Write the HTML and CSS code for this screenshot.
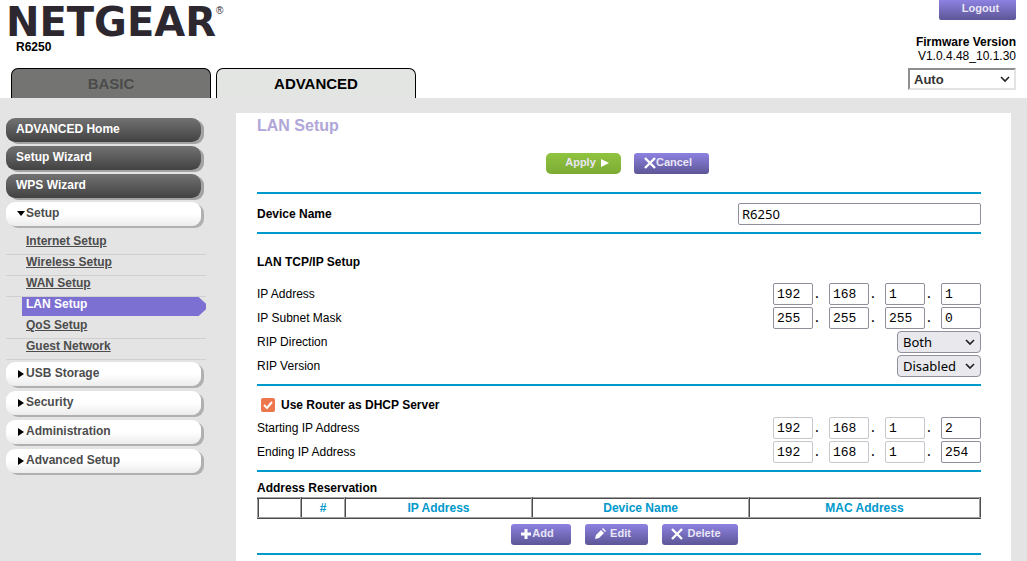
FILE: index.html
```html
<!DOCTYPE html>
<html lang="en">
<head>
<meta charset="utf-8">
<title>NETGEAR Router R6250</title>
<link rel="stylesheet" href="styles.css">
</head>
<body>
<header class="top">
  <div class="brand">
    <div class="logo">NETGEAR<sup class="reg">®</sup></div>
    <div class="model">R6250</div>
    <nav class="tabs">
      <button type="button" class="tab">BASIC</button>
      <button type="button" class="tab tab-on">ADVANCED</button>
    </nav>
  </div>
  <div class="session">
    <button type="button" class="btn logout">Logout</button>
    <div class="firmware"><b>Firmware Version</b><span>V1.0.4.48_10.1.30</span></div>
    <select class="language" aria-label="Language"><option>Auto</option></select>
  </div>
</header>

<div class="body">
  <nav class="side">
    <button type="button" class="pill dark">ADVANCED Home</button>
    <button type="button" class="pill dark">Setup Wizard</button>
    <button type="button" class="pill dark">WPS Wizard</button>
    <button type="button" class="pill light"><svg class="arrow" viewBox="0 0 10 10"><path d="M1 3h8L5 8z"/></svg>Setup</button>
    <ul class="sub">
      <li><a href="#">Internet Setup</a></li>
      <li><a href="#">Wireless Setup</a></li>
      <li><a href="#">WAN Setup</a></li>
      <li class="here"><a href="#">LAN Setup</a></li>
      <li><a href="#">QoS Setup</a></li>
      <li><a href="#">Guest Network</a></li>
    </ul>
    <button type="button" class="pill light"><svg class="arrow" viewBox="0 0 10 10"><path d="M2 2l6 4-6 4z"/></svg>USB Storage</button>
    <button type="button" class="pill light"><svg class="arrow" viewBox="0 0 10 10"><path d="M2 2l6 4-6 4z"/></svg>Security</button>
    <button type="button" class="pill light"><svg class="arrow" viewBox="0 0 10 10"><path d="M2 2l6 4-6 4z"/></svg>Administration</button>
    <button type="button" class="pill light"><svg class="arrow" viewBox="0 0 10 10"><path d="M2 2l6 4-6 4z"/></svg>Advanced Setup</button>
  </nav>

  <main class="panel">
    <h1>LAN Setup</h1>
    <div class="actions form-actions">
      <button type="button" class="btn apply">Apply<svg class="play" viewBox="0 0 8 10"><path d="M0 1l8 4-8 4z"/></svg></button>
      <button type="button" class="btn cancel"><svg class="icon" viewBox="0 0 12 12"><path d="M1 1l10 10M11 1l-10 10" class="stroke"/></svg>Cancel</button>
    </div>

    <section class="block device">
      <div class="row"><label for="device"><b>Device Name</b></label><input id="device" class="text" value="R6250"></div>
    </section>

    <section class="block tcpip">
      <h2>LAN TCP/IP Setup</h2>
      <div class="row"><label for="ip1">IP Address</label>
        <div class="ip"><input id="ip1" value="192"><i>.</i><input aria-label="IP Address 2" value="168"><i>.</i><input aria-label="IP Address 3" value="1"><i>.</i><input aria-label="IP Address 4" value="1"></div></div>
      <div class="row"><label for="mask1">IP Subnet Mask</label>
        <div class="ip"><input id="mask1" value="255"><i>.</i><input aria-label="Subnet Mask 2" value="255"><i>.</i><input aria-label="Subnet Mask 3" value="255"><i>.</i><input aria-label="Subnet Mask 4" value="0"></div></div>
      <div class="row"><label for="ripd">RIP Direction</label><select id="ripd" class="choice"><option>Both</option></select></div>
      <div class="row"><label for="ripv">RIP Version</label><select id="ripv" class="choice"><option>Disabled</option></select></div>
    </section>

    <section class="block dhcp">
      <div class="row check"><input type="checkbox" id="dhcp" checked><label for="dhcp"><b>Use Router as DHCP Server</b></label></div>
      <div class="row"><label for="end4a">Starting IP Address</label>
        <div class="ip"><input disabled aria-label="Starting IP 1" value="192"><i>.</i><input disabled aria-label="Starting IP 2" value="168"><i>.</i><input disabled aria-label="Starting IP 3" value="1"><i>.</i><input id="end4a" value="2"></div></div>
      <div class="row"><label for="end4b">Ending IP Address</label>
        <div class="ip"><input disabled aria-label="Ending IP 1" value="192"><i>.</i><input disabled aria-label="Ending IP 2" value="168"><i>.</i><input disabled aria-label="Ending IP 3" value="1"><i>.</i><input id="end4b" value="254"></div></div>
    </section>

    <section class="block reservation">
      <h2>Address Reservation</h2>
      <table class="hosts">
        <colgroup><col class="c-pick"><col class="c-pick"><col class="c-ip"><col class="c-name"><col></colgroup>
        <tr><th></th><th>#</th><th>IP Address</th><th>Device Name</th><th>MAC Address</th></tr>
      </table>
      <div class="actions">
        <button type="button" class="btn add"><svg class="icon" viewBox="0 0 12 12"><path d="M6 1v10M1 6h10" class="stroke thick"/></svg>Add</button>
        <button type="button" class="btn edit"><svg class="icon" viewBox="0 0 12 12"><path d="M1 11l1-4 5-5 3 3-5 5zM8 1l1-1 3 3-1 1z"/></svg>Edit</button>
        <button type="button" class="btn delete"><svg class="icon" viewBox="0 0 12 12"><path d="M1 1l10 10M11 1l-10 10" class="stroke"/></svg>Delete</button>
      </div>
    </section>
    <div class="block"></div>
  </main>
</div>
</body>
</html>
```
FILE: styles.css
```css
* { box-sizing: border-box; }
html { background: #e4e4e4; }
body {
  margin: 0;
  min-height: 100vh;
  display: flex;
  flex-direction: column;
  font: 12px/14px "Liberation Sans", Arial, sans-serif;
  color: #000;
  overflow: hidden;
}
button, select, input { font: inherit; margin: 0; }
button { border: 0; cursor: pointer; }
h1, h2, ul { margin: 0; padding: 0; }

/* header */
.top {
  display: flex;
  justify-content: space-between;
  background: #fff;
  padding-right: 11px;
}
.brand { display: flex; flex-direction: column; }
.logo {
  display: flex;
  padding: 5px 0 0 6px;
  font: bold 40px/35px "DejaVu Sans", sans-serif;
  color: #2d2830;
}
.reg { font: 10px/12px "Liberation Sans", sans-serif; }
.model { padding-left: 16px; font-weight: bold; }
.tabs { display: flex; gap: 5px; padding: 14px 0 0 11px; }
.tab {
  width: 200px;
  height: 30px;
  border: 1px solid #000;
  border-bottom: 0;
  border-radius: 7px 7px 0 0;
  background: #747572;
  color: #4b4b4b;
  font-size: 15px;
  font-weight: bold;
}
.tab-on { background: #e3e5e2; color: #000; }
.session { display: flex; flex-direction: column; align-items: flex-end; }
.firmware {
  display: flex;
  flex-direction: column;
  text-align: right;
  padding: 15px 0 5px;
}
.language {
  appearance: none;
  width: 108px;
  height: 22px;
  border: 2px solid;
  border-color: #8f8f8f #e3e3e3 #e3e3e3 #8f8f8f;
  padding: 1px 4px 0;
  font-size: 13px;
  font-weight: bold;
  color: #333;
}
.language, .choice {
  background: #fff url("data:image/svg+xml,%3Csvg xmlns='http://www.w3.org/2000/svg' width='10' height='8'%3E%3Cpath d='M1 2l4 4 4-4' fill='none' stroke='%23222' stroke-width='1.6'/%3E%3C/svg%3E") no-repeat right 4px center;
}

/* buttons */
.btn {
  display: flex;
  align-items: center;
  justify-content: center;
  height: 21px;
  padding: 0 7px 3px 0;
  border-radius: 3px;
  background: linear-gradient(#8d82e2, #5d5696);
  color: #e9e6f6;
  font-size: 11px;
  font-weight: bold;
}
.logout { width: 77px; height: 20px; padding: 0 0 4px 6px; border-radius: 0 0 2px 2px; }
.apply { width: 75px; gap: 5px; padding: 0 0 3px 7px; border-radius: 5px; background: linear-gradient(#8fc43f, #7dab35); }
.cancel { width: 75px; }
.add { width: 60px; }
.edit { width: 63px; gap: 4px; }
.delete { width: 76px; gap: 4px; }
.icon { width: 12px; height: 12px; fill: #fff; margin-top: 2px; }
.play { width: 8px; height: 10px; fill: #fff; margin-top: 2px; }
.stroke { stroke: #fff; stroke-width: 2.4; fill: none; }
.thick { stroke-width: 3; }

/* side menu */
.body { flex: 1; display: flex; gap: 30px; padding-right: 16px; }
.side { width: 200px; flex: none; margin: 20px 0 0 6px; }
.pill {
  display: flex;
  align-items: center;
  width: 195px;
  height: 24px;
  margin-bottom: 4px;
  padding: 0 10px 2px;
  border-radius: 9px;
  font-weight: bold;
}
.dark {
  background: linear-gradient(#727272, #424242);
  box-shadow: 3px 2px 0 #a3a3a3;
  color: #fff;
}
.light {
  margin-bottom: 5px;
  background: linear-gradient(#fff 50%, #ececec);
  box-shadow: 3px 2px 0 #b0b0b0;
  color: #4c4c4c;
}
.arrow { width: 10px; height: 10px; fill: #000; }
.sub { list-style: none; padding: 3px 0 2px; width: 200px; }
.sub li { height: 21px; padding-left: 20px; border-bottom: 1px solid #d0d0d0; font-weight: bold; }
.sub a { color: #4c4c4c; }
.sub .here { padding-left: 16px; border-color: transparent; }
.here a {
  display: block;
  height: 19px;
  padding-left: 4px;
  background: #7c70d2;
  text-decoration: none;
  clip-path: polygon(0 0, 96% 0, 100% 35%, 100% 65%, 96% 100%, 0 100%);
}
.sub .here a { color: #fff; }

/* main panel */
.panel { flex: 1; margin-top: 15px; padding: 3px 30px 0 21px; background: #fff; }
h1 { font-size: 16px; line-height: 19px; color: #b0a6d8; }
h2 { font-size: 12px; line-height: 14px; }
.actions { display: flex; justify-content: center; gap: 14px; padding: 5px 0 8px 10px; }
.form-actions { gap: 13px; padding: 18px 0 18px 17px; }
.block { border-top: 2px solid #0099cc; }
.row { display: flex; align-items: center; justify-content: space-between; height: 24px; }
.device { padding: 8px 0 6px; }
.tcpip { padding: 21px 0 6px; }
.tcpip h2 { margin-bottom: 13px; }
.dhcp { padding: 6px 0; }
.row.check { justify-content: flex-start; gap: 6px; padding: 2px 0 0 4px; }
.reservation { padding-top: 9px; }
.reservation h2 { margin-bottom: 2px; }
.text, .ip input {
  height: 22px;
  padding: 0 3px;
  border: 1px solid #8f8f9d;
  border-radius: 2px;
  background: #fff;
  color: #000;
}
.text { width: 243px; font: 13px "Noto Sans", sans-serif; }
.ip { display: flex; align-items: center; }
.ip input, .ip i { font: 13px "Liberation Mono", monospace; }
.ip input { width: 40px; }
.ip i { width: 16px; text-align: left; }
.ip input:disabled { border-color: #c7c7ce; }
.choice {
  appearance: none;
  width: 84px;
  height: 22px;
  padding: 0 20px 0 5px;
  border: 1px solid #8f8f9d;
  border-radius: 4px;
  background-color: #e9e9ed;
  background-position: right 5px center;
  font: 13px "Noto Sans", sans-serif;
  color: #000;
}
.check input {
  appearance: none;
  width: 14px;
  height: 14px;
  border-radius: 2px;
  background: #ed764d url("data:image/svg+xml,%3Csvg xmlns='http://www.w3.org/2000/svg' width='14' height='14'%3E%3Cpath d='M3 7l3 3 5-6' fill='none' stroke='white' stroke-width='2'/%3E%3C/svg%3E");
}
.hosts { width: 100%; table-layout: fixed; border-collapse: collapse; border: 2px ridge #a0a0a0; }
.hosts th { height: 20px; padding: 0; border: 2px ridge #a0a0a0; color: #0099cc; }
.c-pick { width: 6%; }
.c-ip { width: 26%; }
.c-name { width: 30%; }
```
